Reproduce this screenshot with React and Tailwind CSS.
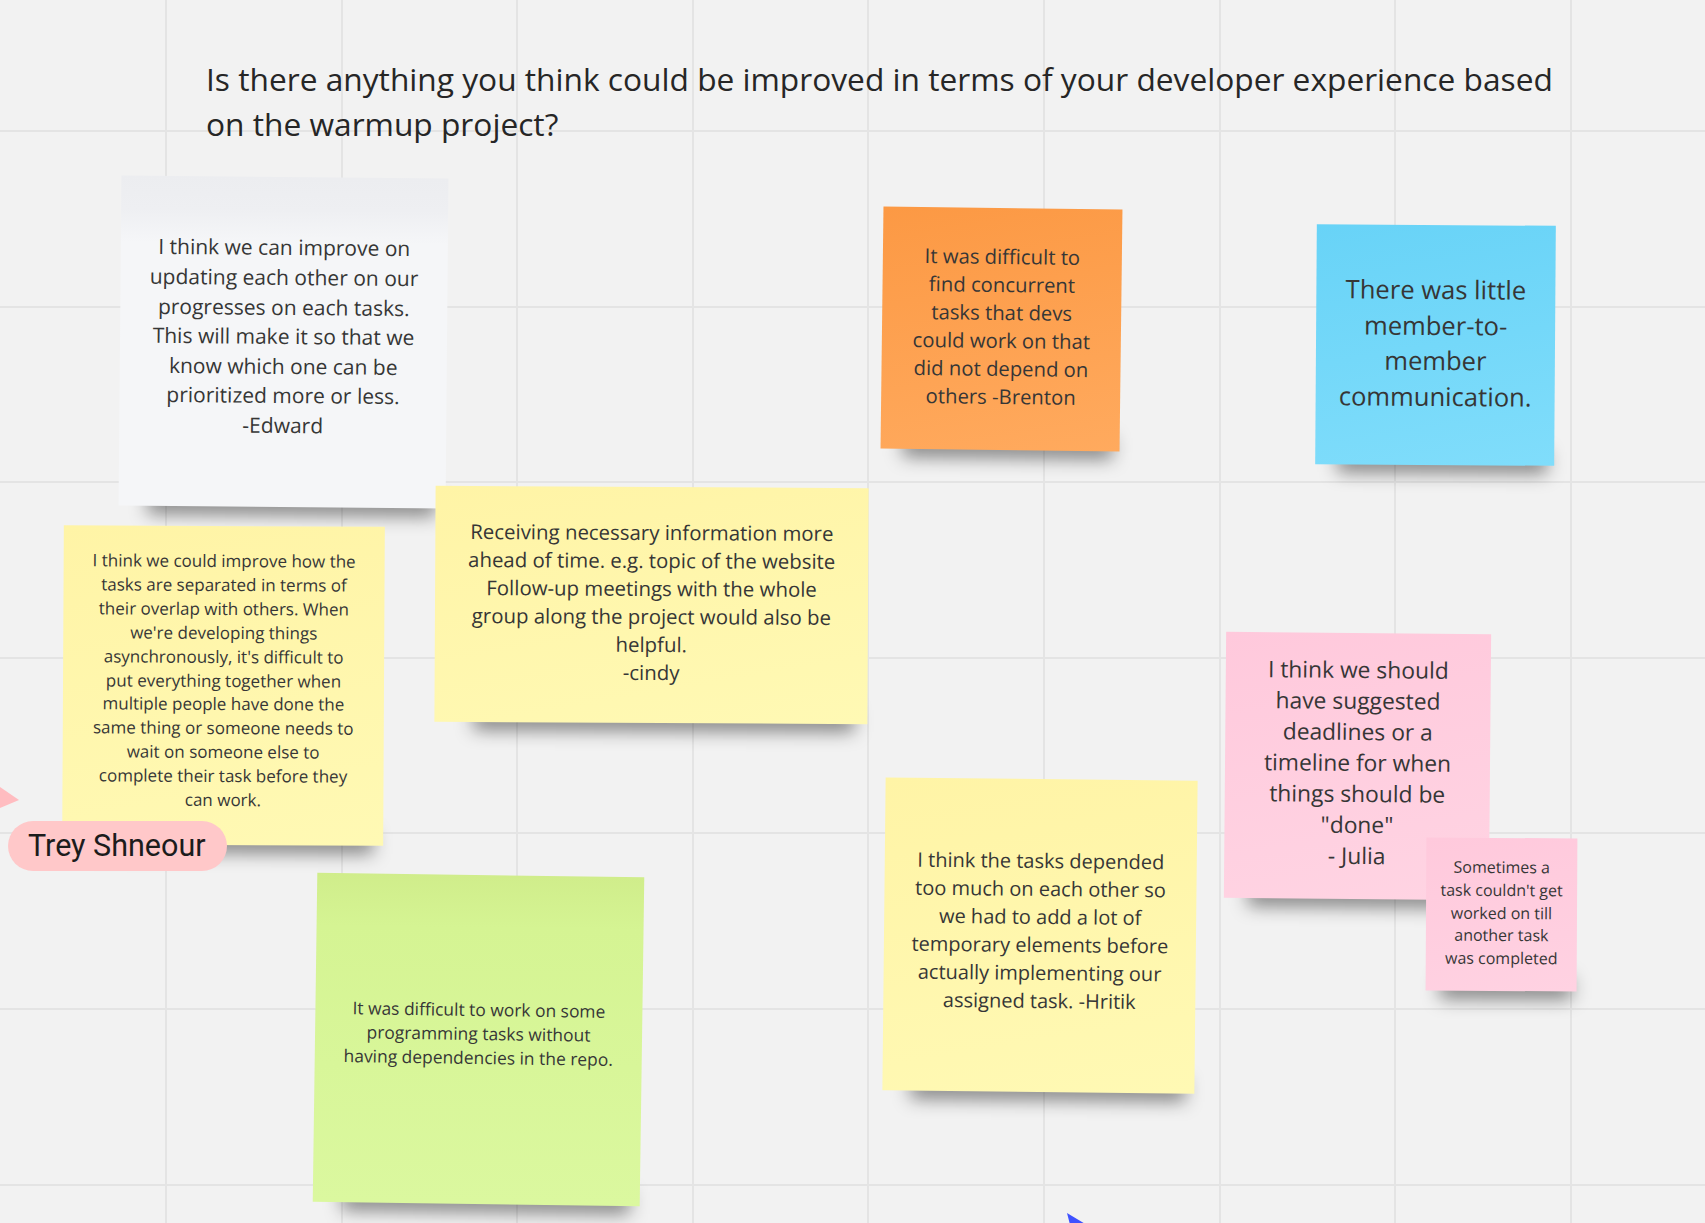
import React from "react";

const noteFont = "font-['Open_Sans','Liberation_Sans',sans-serif]";

// one sticky note on the board; its place on the canvas is its content
function Sticky({ className, bg, textClass, lines }) {
  return (
    <div className={`absolute ${className}`}>
      <div className="absolute left-[9%] right-[3%] bottom-[-8px] h-[22px] bg-black/45 blur-[9px]" />
      <div className={`relative flex h-full w-full items-center justify-center ${bg}`}>
        <p className={`whitespace-nowrap text-center text-[#363636] ${noteFont} ${textClass}`}>
          {lines.map((l, i) => (
            <React.Fragment key={i}>
              {l}
              {i < lines.length - 1 && <br />}
            </React.Fragment>
          ))}
        </p>
      </div>
    </div>
  );
}

export default function App() {
  return (
    <div className="relative h-screen w-full overflow-hidden bg-[#f2f2f2] bg-[image:repeating-linear-gradient(to_right,transparent_0_165px,#e4e4e4_165px_167px,transparent_167px_175.6px),repeating-linear-gradient(to_bottom,transparent_0_130px,#e4e4e4_130px_132px,transparent_132px_175.6px)]">
      <h1 className={`absolute left-[206px] top-[56px] text-[31.7px] leading-[45px] text-[#262626] ${noteFont}`}>
        Is there anything you think could be improved in terms of your developer experience based
        <br />
        on the warmup project?
      </h1>

      <Sticky
        className="left-[120px] top-[177px] w-[327px] h-[330px] rotate-[0.5deg]"
        bg="pb-[10px] bg-[linear-gradient(to_bottom,#ecedf0_0%,#eeeff2_10%,#f5f6f8_20%,#f5f6f8_100%)]"
        textClass="text-[21px] leading-[29.6px]"
        lines={[
          "I think we can improve on",
          "updating each other on our",
          "progresses on each tasks.",
          "This will make it so that we",
          "know which one can be",
          "prioritized more or less.",
          "-Edward",
        ]}
      />

      <Sticky
        className="left-[882px] top-[208px] w-[239px] h-[242px] rotate-[0.7deg]"
        bg="pb-[6px] bg-[linear-gradient(170deg,#fc9944,#ffaa5e)]"
        textClass="text-[20.3px] leading-[28px]"
        lines={[
          "It was difficult to",
          "find concurrent",
          "tasks that devs",
          "could work on that",
          "did not depend on",
          "others -Brenton",
        ]}
      />

      <Sticky
        className="left-[1316px] top-[225px] w-[239px] h-[240px] rotate-[0.4deg]"
        bg="pb-[4px] bg-[linear-gradient(170deg,#68d3f7,#80ddfb)]"
        textClass="text-[25.6px] leading-[35.5px]"
        lines={["There was little", "member-to-", "member", "communication."]}
      />

      <Sticky
        className="left-[435px] top-[487px] w-[433px] h-[236px] rotate-[0.3deg]"
        bg="pb-[6px] bg-[linear-gradient(170deg,#fff4a6,#fff9b4)]"
        textClass="text-[20.4px] leading-[28px]"
        lines={[
          "Receiving necessary information more",
          "ahead of time. e.g. topic of the website",
          "Follow-up meetings with the whole",
          "group along the project would also be",
          "helpful.",
          "-cindy",
        ]}
      />

      <Sticky
        className="left-[63px] top-[526px] w-[321px] h-[319px] rotate-[0.3deg]"
        bg="pb-[10px] bg-[linear-gradient(170deg,#fff4a6,#fff9b4)]"
        textClass="text-[17px] leading-[23.9px]"
        lines={[
          "I think we could improve how the",
          "tasks are separated in terms of",
          "their overlap with others. When",
          "we're developing things",
          "asynchronously, it's difficult to",
          "put everything together when",
          "multiple people have done the",
          "same thing or someone needs to",
          "wait on someone else to",
          "complete their task before they",
          "can work.",
        ]}
      />

      <Sticky
        className="left-[315px] top-[875px] w-[327px] h-[329px] rotate-[0.8deg]"
        bg="pb-[13px] bg-[linear-gradient(to_bottom,#d0ed8b_0%,#d5f493_16%,#dbf89f_100%)]"
        textClass="text-[17.4px] leading-[24px] text-[#444]"
        lines={[
          "It was difficult to work on some",
          "programming tasks without",
          "having dependencies in the repo.",
        ]}
      />

      <Sticky
        className="left-[884px] top-[779px] w-[312px] h-[313px] rotate-[0.6deg]"
        bg="pb-[10px] bg-[linear-gradient(170deg,#fff4a6,#fff9b4)]"
        textClass="text-[20px] leading-[28px]"
        lines={[
          "I think the tasks depended",
          "too much on each other so",
          "we had to add a lot of",
          "temporary elements before",
          "actually implementing our",
          "assigned task. -Hritik",
        ]}
      />

      <Sticky
        className="left-[1225px] top-[633px] w-[265px] h-[266px] rotate-[0.5deg]"
        bg="pb-[7px] bg-[linear-gradient(170deg,#ffc9dc,#ffd4e3)]"
        textClass="text-[22.8px] leading-[31px]"
        lines={[
          "I think we should",
          "have suggested",
          "deadlines or a",
          "timeline for when",
          "things should be",
          "\"done\"",
          "- Julia",
        ]}
      />

      <Sticky
        className="left-[1426px] top-[838px] w-[151px] h-[153px] rotate-[0.3deg]"
        bg="pb-[3px] bg-[linear-gradient(170deg,#ffc9dc,#ffd2e2)]"
        textClass="text-[16px] leading-[22.8px]"
        lines={[
          "Sometimes a",
          "task couldn't get",
          "worked on till",
          "another task",
          "was completed",
        ]}
      />

      <svg className="absolute left-0 top-[785px] h-[24px] w-[20px]" viewBox="0 0 20 24">
        <polygon points="0,2 19,15 0,23" fill="#ffbcc0" />
      </svg>
      <div className="absolute left-[8px] top-[821px] flex h-[50px] w-[219px] items-center rounded-full bg-[#ffc8c9] pl-[20px]">
        <span className="font-['Roboto',sans-serif] text-[30.5px] leading-none text-[#1c1c1c]">Trey Shneour</span>
      </div>

      <svg className="absolute left-[1060px] top-[1206px] h-[40px] w-[40px]" viewBox="0 0 40 40">
        <polygon points="7,7 32,22 21,25 15,38" fill="#3f52ff" />
      </svg>
    </div>
  );
}
